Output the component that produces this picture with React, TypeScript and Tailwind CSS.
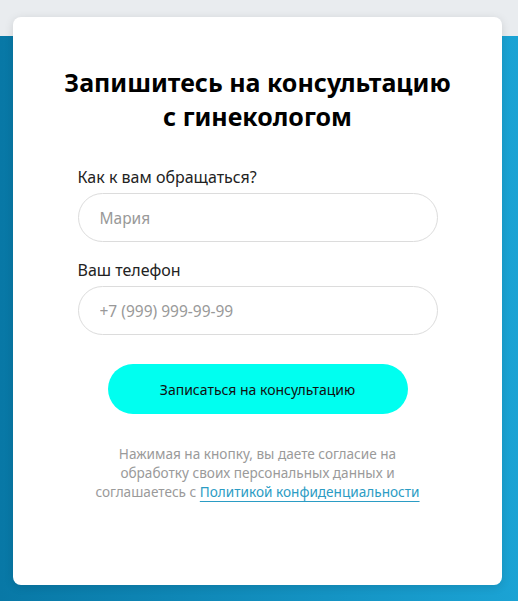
export default function App() {
  return (
    <div
      className="h-[601px] w-full overflow-hidden bg-[linear-gradient(#e9ecef_0_36px,transparent_36px),linear-gradient(90deg,#0878a6,#1ba3d4)] pt-[17px]"
      style={{ fontFamily: '"Noto Sans", Inter, sans-serif' }}
    >
      <div className="ml-[13px] mr-[16px] h-[568px] rounded-[8px] bg-white pt-[48px] shadow-[0_2px_10px_rgba(0,0,0,0.12)]">
        <h1 className="text-center text-[25px] font-bold leading-[34px] text-black">
          Запишитесь на консультацию
          <br />с гинекологом
        </h1>

        <form className="mx-auto mt-[34px] flex w-[360px] flex-col">
          <label className="text-[16px] leading-[20px] text-[#222]">Как к вам обращаться?</label>
          <input
            className="mt-[6px] h-[49px] rounded-full border border-[#dcdcdc] px-[21px] text-[15.5px] text-[#222] outline-none placeholder:text-[#999]"
            placeholder="Мария"
          />
          <label className="mt-[18px] text-[16px] leading-[20px] text-[#222]">Ваш телефон</label>
          <input
            className="mt-[6px] h-[49px] rounded-full border border-[#dcdcdc] px-[21px] text-[15.5px] text-[#222] outline-none placeholder:text-[#999]"
            placeholder="+7 (999) 999-99-99"
          />
          <button
            type="button"
            className="mx-auto mt-[29px] h-[50px] w-[300px] rounded-full bg-[#00fff0] text-[14px] text-[#111]"
          >
            Записаться на консультацию
          </button>
        </form>

        <p className="mx-auto mt-[30px] w-[340px] text-center text-[13.6px] leading-[19px] text-[#9a9a9a]">
          Нажимая на кнопку, вы даете согласие на
          <br />
          обработку своих персональных данных и
          <br />
          соглашаетесь с{" "}
          <a href="#" className="text-[#2b9cc4] underline decoration-[#2b9cc4] underline-offset-[4px]">
            Политикой конфиденциальности
          </a>
        </p>
      </div>
    </div>
  );
}
